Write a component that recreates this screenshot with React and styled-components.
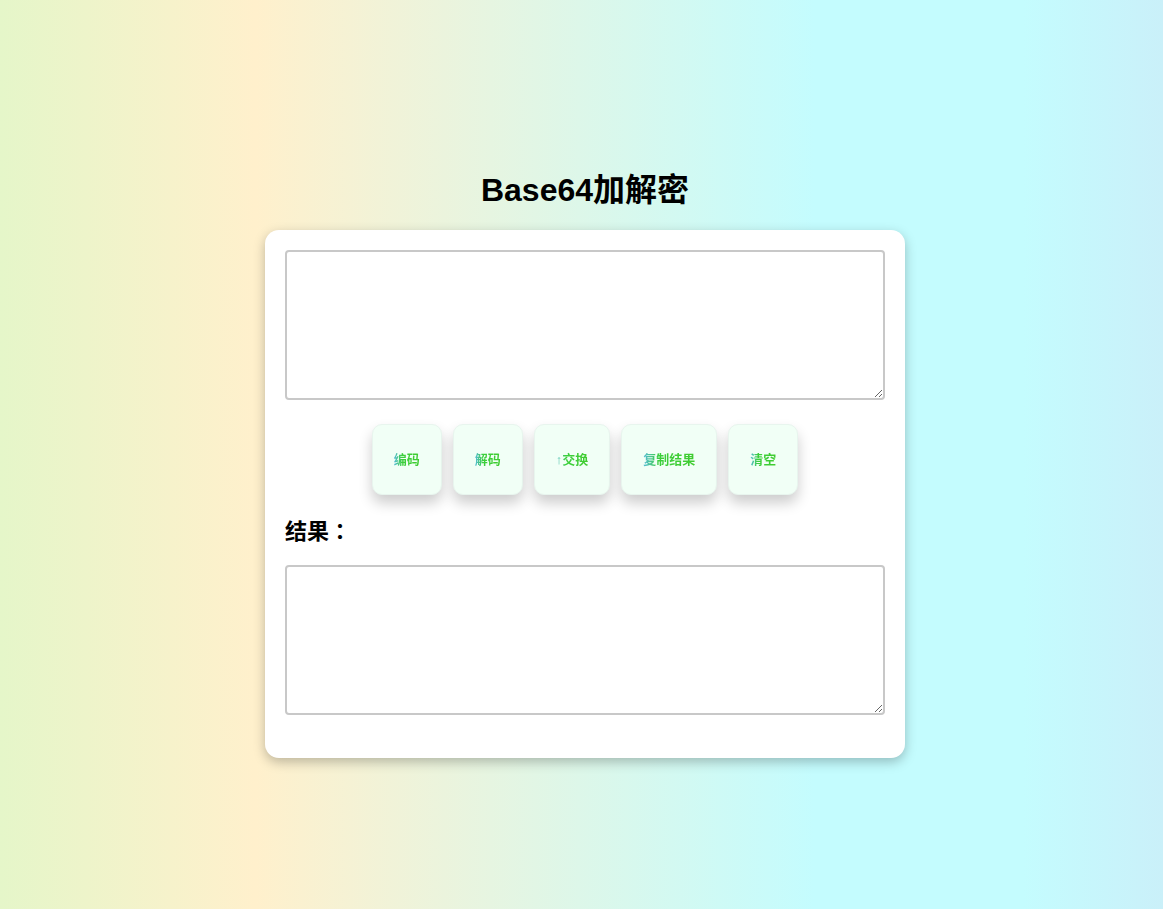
import React, { useState } from 'react';
import styled, { createGlobalStyle } from 'styled-components';

const GlobalStyle = createGlobalStyle`
  html, body {
    margin: 0;
    padding: 0;
  }
  body {
    font-family: "Liberation Sans", "Noto Sans CJK SC", Arial, sans-serif;
    background: linear-gradient(to right, #e5f6c9 0%, #fff0cc 22%, #c4fcfe 70%, #c4fcfe 88%, #caf0f9 100%);
    min-height: 100vh;
  }
`;

const Page = styled.div`
  min-height: 909px;
  display: flex;
  flex-direction: column;
  align-items: center;
  padding: 171px 0 0 7px;
  box-sizing: border-box;
`;

const Title = styled.h1`
  margin: 0 0 21px;
  font-size: 32px;
  line-height: 38px;
  font-weight: bold;
  color: #000;
`;

const Card = styled.div`
  width: 640px;
  box-sizing: border-box;
  padding: 20px 20px 43px;
  background: #fff;
  border-radius: 14px;
  box-shadow: 0 4px 12px rgba(0, 0, 0, 0.25);
  display: flex;
  flex-direction: column;
`;

const TextBox = styled.textarea`
  display: block;
  width: 100%;
  height: 150px;
  box-sizing: border-box;
  border: 2px solid #c8c8c8;
  border-radius: 4px;
  padding: 8px;
  font-family: inherit;
  font-size: 14px;
  resize: vertical;
  outline: none;
`;

const Actions = styled.div`
  display: flex;
  justify-content: center;
  gap: 11px;
  margin: 24px 0 24px;
`;

const Action = styled.button`
  padding: 27px 21px;
  border: 1px solid #e8f5ee;
  border-radius: 10px;
  background: #f1fff6;
  box-shadow: 0 8px 14px rgba(0, 0, 0, 0.2);
  font-family: inherit;
  font-size: 13px;
  line-height: 15px;
  font-weight: bold;
  cursor: pointer;
`;

const ActionText = styled.span`
  background: linear-gradient(to right, #55bbdd, #3ccf3c 30%, #40cc30);
  -webkit-background-clip: text;
  background-clip: text;
  color: transparent;
`;

const ResultLabel = styled.h3`
  margin: 0 0 20px;
  font-family: "Liberation Sans", "Noto Sans CJK TC", sans-serif;
  font-size: 22px;
  line-height: 26px;
  font-weight: bold;
  color: #000;
`;

const buttons = ['编码', '解码', '↑交换', '复制结果', '清空'];

export default function App() {
  const [input, setInput] = useState('');
  const [output, setOutput] = useState('');

  const handle = (label) => {
    try {
      if (label === '编码') setOutput(btoa(unescape(encodeURIComponent(input))));
      if (label === '解码') setOutput(decodeURIComponent(escape(atob(input))));
      if (label === '↑交换') {
        setInput(output);
        setOutput(input);
      }
      if (label === '复制结果' && navigator.clipboard) navigator.clipboard.writeText(output);
      if (label === '清空') {
        setInput('');
        setOutput('');
      }
    } catch (e) {
      setOutput('');
    }
  };

  return (
    <>
      <GlobalStyle />
      <Page>
        <Title>Base64加解密</Title>
        <Card>
          <TextBox value={input} onChange={(e) => setInput(e.target.value)} />
          <Actions>
            {buttons.map((b) => (
              <Action key={b} onClick={() => handle(b)}>
                <ActionText>{b}</ActionText>
              </Action>
            ))}
          </Actions>
          <ResultLabel>结果：</ResultLabel>
          <TextBox value={output} onChange={(e) => setOutput(e.target.value)} />
        </Card>
      </Page>
    </>
  );
}
